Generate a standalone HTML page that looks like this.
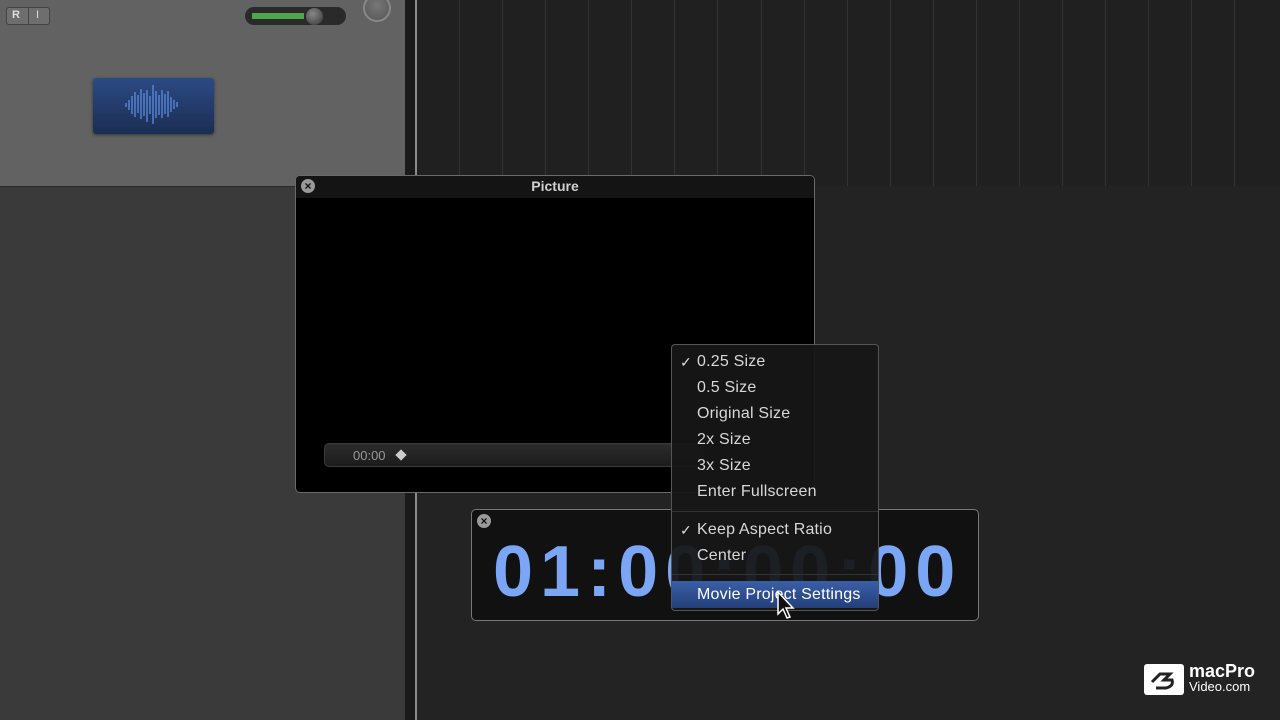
<!DOCTYPE html>
<html><head><style>
*{margin:0;padding:0;box-sizing:border-box}
body{width:1280px;height:720px;overflow:hidden;background:#232323;font-family:"Liberation Sans",sans-serif;position:relative}
.a{position:absolute}
.mi{position:absolute;left:25px;font-size:16px;color:#d8d8d8;letter-spacing:0.2px}
.ck{position:absolute;left:8px;font-size:14px;color:#ddd}
</style></head><body>
<div class="a" style="left:0;top:0;width:405px;height:186px;background:#626262"></div>
<div class="a" style="left:0;top:186px;width:405px;height:534px;background:#3a3a3a;border-top:1px solid #2a2a2a"></div>
<div class="a" style="left:405px;top:0;width:11px;height:720px;background:#1a1a1a"></div>
<div class="a" style="left:415px;top:0;width:2px;height:720px;background:#8a8a8a"></div>
<div class="a" style="left:417px;top:0;width:863px;height:186px;background:#202020"></div>
<div class="a" style="left:417px;top:186px;width:863px;height:534px;background:#232323"></div>
<svg class="a" style="left:0;top:0" width="1280" height="186">
<g stroke="#333" stroke-width="1">
<line x1="459.5" y1="0" x2="459.5" y2="186"/><line x1="502.5" y1="0" x2="502.5" y2="186"/><line x1="545.5" y1="0" x2="545.5" y2="186"/><line x1="588.5" y1="0" x2="588.5" y2="186"/><line x1="631.5" y1="0" x2="631.5" y2="186"/><line x1="674.5" y1="0" x2="674.5" y2="186"/><line x1="717.5" y1="0" x2="717.5" y2="186"/><line x1="761.5" y1="0" x2="761.5" y2="186"/><line x1="804.5" y1="0" x2="804.5" y2="186"/><line x1="847.5" y1="0" x2="847.5" y2="186"/><line x1="890.5" y1="0" x2="890.5" y2="186"/><line x1="933.5" y1="0" x2="933.5" y2="186"/><line x1="976.5" y1="0" x2="976.5" y2="186"/><line x1="1019.5" y1="0" x2="1019.5" y2="186"/><line x1="1062.5" y1="0" x2="1062.5" y2="186"/><line x1="1105.5" y1="0" x2="1105.5" y2="186"/><line x1="1148.5" y1="0" x2="1148.5" y2="186"/><line x1="1191.5" y1="0" x2="1191.5" y2="186"/><line x1="1234.5" y1="0" x2="1234.5" y2="186"/>
</g></svg>
<!-- R I buttons -->
<div class="a" style="left:6px;top:7px;width:44px;height:18px;background:#6e6e6e;border:1px solid #444;border-radius:3px"></div>
<div class="a" style="left:28px;top:8px;width:1px;height:16px;background:#444"></div>
<div class="a" style="left:12px;top:9px;font-size:11px;color:#ddd;font-weight:bold">R</div>
<div class="a" style="left:36px;top:9px;font-size:11px;color:#ddd">I</div>
<!-- volume -->
<div class="a" style="left:245px;top:7px;width:101px;height:18px;background:#2a2a2a;border-radius:9px"></div>
<div class="a" style="left:252px;top:13px;width:52px;height:6px;background:#4ea64a"></div>
<div class="a" style="left:306px;top:8px;width:17px;height:17px;background:radial-gradient(circle at 40% 35%,#888,#333);border-radius:50%"></div>
<div class="a" style="left:363px;top:-6px;width:28px;height:28px;background:radial-gradient(circle at 50% 40%,#777,#555);border:2px solid #888;border-radius:50%"></div>
<!-- audio region -->
<div class="a" style="left:93px;top:78px;width:121px;height:56px;background:linear-gradient(#2c4a84,#1b2d52);border-radius:3px;box-shadow:0 1px 3px #333"></div>
<svg class="a" style="left:120px;top:82px" width="70" height="46"><g stroke="#5a8de0" stroke-width="1.3">
<line x1="6" y1="21" x2="6" y2="25"/><line x1="9" y1="18" x2="9" y2="28"/><line x1="12" y1="14" x2="12" y2="32"/><line x1="15" y1="10" x2="15" y2="35"/><line x1="18" y1="13" x2="18" y2="31"/><line x1="21" y1="7" x2="21" y2="37"/><line x1="24" y1="11" x2="24" y2="34"/><line x1="27" y1="8" x2="27" y2="40"/><line x1="30" y1="14" x2="30" y2="32"/><line x1="33" y1="3" x2="33" y2="42"/><line x1="36" y1="9" x2="36" y2="36"/><line x1="39" y1="13" x2="39" y2="33"/><line x1="42" y1="8" x2="42" y2="36"/><line x1="45" y1="12" x2="45" y2="32"/><line x1="48" y1="9" x2="48" y2="35"/><line x1="51" y1="15" x2="51" y2="30"/><line x1="54" y1="18" x2="54" y2="27"/><line x1="57" y1="20" x2="57" y2="25"/></g></svg>
<!-- Picture window -->
<div class="a" style="left:295px;top:175px;width:520px;height:318px;background:#000;border:1px solid #6a6a6a;border-radius:5px;overflow:hidden">
<div style="height:22px;background:#141414;text-align:center;color:#d0d0d0;font-size:14px;line-height:21px;font-weight:bold">Picture</div>
<div class="a" style="left:28px;top:267px;width:380px;height:24px;background:linear-gradient(#2c2c2c,#1c1c1c);border:1px solid #3a3a3a;border-radius:5px"></div>
<div class="a" style="left:57px;top:272px;font-size:13px;color:#999">00:00</div>
<div class="a" style="left:101px;top:275px;width:8px;height:8px;background:#ccc;transform:rotate(45deg)"></div>
</div>
<div class="a" style="left:301px;top:179px;width:14px;height:14px;border-radius:50%;background:#999;color:#111;font-size:12px;line-height:14px;text-align:center;font-weight:bold">×</div>
<!-- timecode window -->
<div class="a" style="left:471px;top:509px;width:508px;height:112px;background:#111;border:1px solid #777;border-radius:5px;overflow:hidden">
<div class="a" style="left:21px;top:26px;font-size:72px;font-weight:bold;color:#7aa6f5;letter-spacing:7px;line-height:72px;white-space:nowrap">01:00:00:00</div>
</div>
<div class="a" style="left:477px;top:514px;width:14px;height:14px;border-radius:50%;background:#999;color:#111;font-size:12px;line-height:14px;text-align:center;font-weight:bold">×</div>
<!-- menu -->
<div class="a" style="left:671px;top:344px;width:208px;height:267px;background:rgba(22,22,22,0.94);border:1px solid #555;border-radius:4px">
<span class="ck" style="top:9px">✓</span><div class="mi" style="top:8px">0.25 Size</div>
<div class="mi" style="top:34px">0.5 Size</div>
<div class="mi" style="top:60px">Original Size</div>
<div class="mi" style="top:86px">2x Size</div>
<div class="mi" style="top:112px">3x Size</div>
<div class="mi" style="top:138px">Enter Fullscreen</div>
<div class="a" style="left:0;top:166px;width:206px;height:1px;background:#333"></div>
<span class="ck" style="top:177px">✓</span><div class="mi" style="top:176px">Keep Aspect Ratio</div>
<div class="mi" style="top:202px">Center</div>
<div class="a" style="left:0;top:229px;width:206px;height:1px;background:#333"></div>
<div class="a" style="left:0;top:236px;width:206px;height:27px;background:linear-gradient(#3a5fa8,#233f7a)"></div>
<div class="mi" style="top:241px;color:#fff">Movie Project Settings</div>
</div>
<svg class="a" style="left:776px;top:590px" width="22" height="34"><path d="M2 2 L2 24 L7 19 L11 28 L14 27 L10 18 L17 18 Z" fill="#111" stroke="#fff" stroke-width="1.5"/></svg>
<!-- logo -->
<div class="a" style="left:1144px;top:664px;width:40px;height:31px;background:#fff;border-radius:3px"></div>
<svg class="a" style="left:1148px;top:668px" width="32" height="24"><path d="M4 14 L12 6 L22 6 L16 12 L24 12 Q26 18 18 20 L8 20" fill="none" stroke="#222" stroke-width="3"/></svg>
<div class="a" style="left:1189px;top:662px;font-size:18px;font-weight:bold;color:#fff;line-height:18px">macPro</div>
<div class="a" style="left:1189px;top:680px;font-size:13px;color:#fff;line-height:14px">Video.com</div>
</body></html>
